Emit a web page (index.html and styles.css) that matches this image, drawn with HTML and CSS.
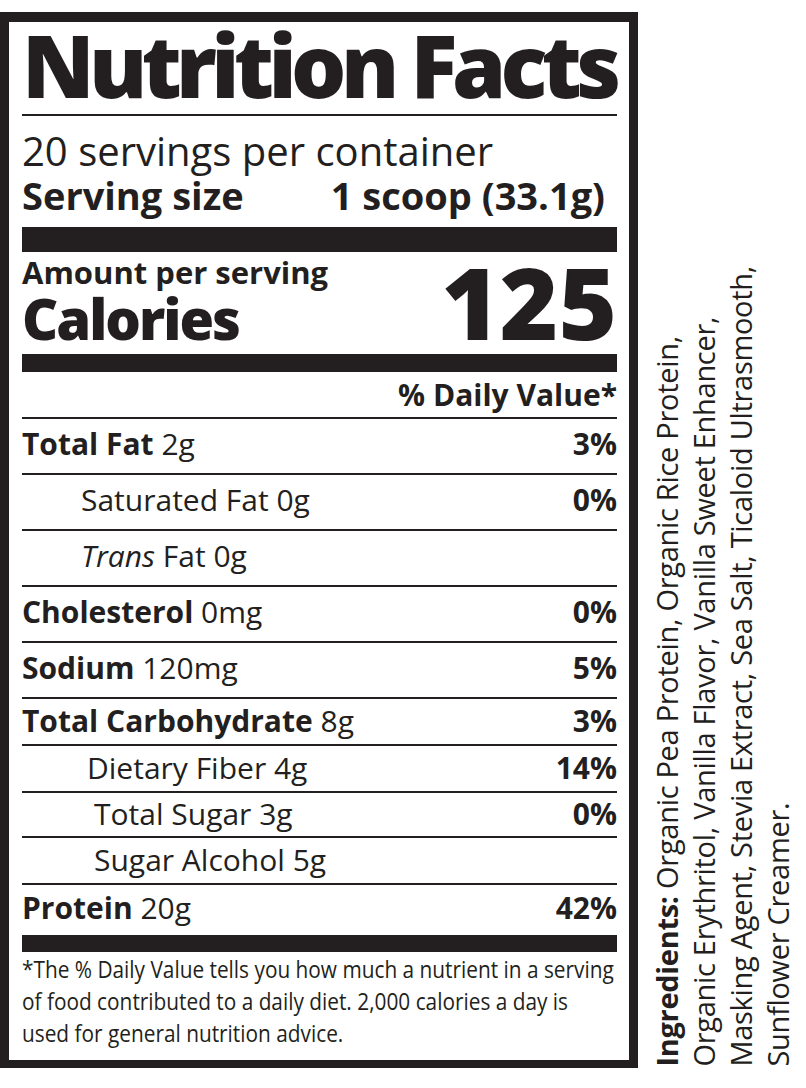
FILE: index.html
```html
<!DOCTYPE html>
<html lang="en">
<head>
<meta charset="utf-8">
<title>Nutrition Facts</title>
<link rel="stylesheet" href="styles.css">
</head>
<body>
<main class="page">
  <section class="label">
    <h1 class="title">Nutrition Facts</h1>
    <div class="rule"></div>
    <p class="servings">20 servings per container</p>
    <div class="serving-size"><span>Serving size</span><span>1 scoop (33.1g)</span></div>
    <div class="bar bar-thick"></div>
    <div class="calories">
      <div class="cal-left">
        <div class="amount">Amount per serving</div>
        <div class="cal-label">Calories</div>
      </div>
      <div class="cal-value">125</div>
    </div>
    <div class="bar bar-mid"></div>
    <div class="dv-head">% Daily Value*</div>
    <div class="row"><span><b class="name">Total Fat</b> 2g</span><b class="pct">3%</b></div>
    <div class="row"><span class="sub">Saturated Fat 0g</span><b class="pct">0%</b></div>
    <div class="row"><span class="sub"><i>Trans</i> Fat 0g</span></div>
    <div class="row"><span><b class="name">Cholesterol</b> 0mg</span><b class="pct">0%</b></div>
    <div class="row"><span><b class="name">Sodium</b> 120mg</span><b class="pct">5%</b></div>
    <div class="row compact"><span><b class="name">Total Carbohydrate</b> 8g</span><b class="pct">3%</b></div>
    <div class="row compact"><span class="sub2">Dietary Fiber 4g</span><b class="pct">14%</b></div>
    <div class="row compact short"><span class="sub3">Total Sugar 3g</span><b class="pct">0%</b></div>
    <div class="row compact"><span class="sub3">Sugar Alcohol 5g</span></div>
    <div class="row protein"><span><b class="name">Protein</b> 20g</span><b class="pct">42%</b></div>
    <div class="bar bar-bottom"></div>
    <p class="footnote">*The % Daily Value tells you how much a nutrient in a serving<br>of food contributed to a daily diet. 2,000 calories a day is<br>used for general nutrition advice.</p>
  </section>
  <aside class="ingredients">
    <p><b>Ingredients:</b> Organic Pea Protein, Organic Rice Protein,<br>Organic Erythritol, Vanilla Flavor, Vanilla Sweet Enhancer,<br>Masking Agent, Stevia Extract, Sea Salt, Ticaloid Ultrasmooth,<br>Sunflower Creamer.</p>
  </aside>
</main>
</body>
</html>
```

FILE: styles.css
```css
* {
  box-sizing: border-box;
  margin: 0;
  padding: 0;
}

body {
  background: #ffffff;
  color: #231f20;
  font-family: "Open Sans", sans-serif;
}

.page {
  display: flex;
  align-items: flex-end;
  padding-top: 12px;
  width: 806px;
}

.label {
  flex: none;
  width: 638px;
  border: solid #231f20;
  border-width: 10px 9px 8px 9px;
  padding: 0 12px 11px 13px;
}

.title {
  font-size: 87px;
  font-weight: 800;
  line-height: 84px;
  white-space: nowrap;
  letter-spacing: -5.6px;
}

.rule {
  height: 2px;
  background: #231f20;
  margin-top: 8px;
}

.servings {
  font-size: 40px;
  font-weight: 400;
  line-height: 44px;
  margin-top: 13px;
  white-space: nowrap;
}

.serving-size {
  display: flex;
  justify-content: space-between;
  font-size: 38px;
  font-weight: 700;
  line-height: 44px;
  padding-right: 12px;
  white-space: nowrap;
}

.bar {
  background: #231f20;
}

.bar-thick {
  height: 25px;
  margin-top: 10px;
}

.calories {
  display: flex;
  justify-content: space-between;
  align-items: last baseline;
  padding-top: 4px;
}

.amount {
  font-size: 31px;
  font-weight: 700;
  line-height: 32px;
  white-space: nowrap;
}

.cal-label {
  font-size: 56px;
  font-weight: 800;
  line-height: 60px;
  letter-spacing: -2px;
}

.cal-value {
  font-size: 100px;
  font-weight: 800;
  line-height: 84px;
}

.bar-mid {
  height: 18px;
  margin-top: 6px;
}

.dv-head {
  height: 47px;
  line-height: 45px;
  text-align: right;
  font-size: 30px;
  font-weight: 700;
  border-bottom: 2px solid #231f20;
  white-space: nowrap;
}

.row {
  display: flex;
  justify-content: space-between;
  align-items: center;
  height: 56px;
  padding-bottom: 5px;
  border-bottom: 2px solid #231f20;
  font-size: 30px;
  line-height: 36px;
  white-space: nowrap;
}

.row.compact {
  height: 47px;
  padding-bottom: 2px;
}

.row.short {
  height: 45px;
}

.row.protein {
  height: 50px;
  padding-bottom: 4px;
  border-bottom: 0;
}

.name,
.pct {
  font-weight: 700;
}

.sub {
  padding-left: 59px;
}

.sub2 {
  padding-left: 65px;
}

.sub3 {
  padding-left: 72px;
}

.bar-bottom {
  height: 17px;
}

.footnote {
  font-family: "Open Sans", sans-serif;
  font-size: 23px;
  line-height: 32px;
  margin-top: 1px;
  white-space: nowrap;
  transform: scaleX(0.905);
  transform-origin: left center;
}

.ingredients {
  flex: none;
  margin-left: 10px;
  margin-bottom: 1px;
  writing-mode: vertical-rl;
  transform: rotate(180deg);
  font-size: 29px;
  line-height: 37px;
  letter-spacing: -0.3px;
  white-space: nowrap;
}
```
